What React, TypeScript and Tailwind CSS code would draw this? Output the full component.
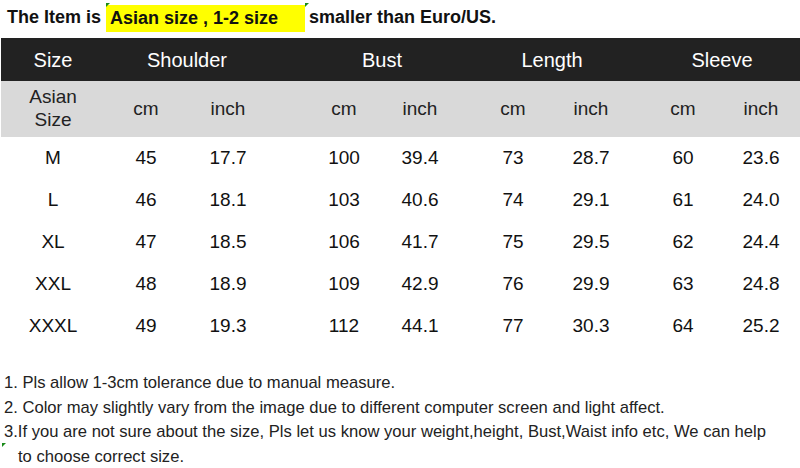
import React from "react";

const rows = [
  ["M", "45", "17.7", "100", "39.4", "73", "28.7", "60", "23.6"],
  ["L", "46", "18.1", "103", "40.6", "74", "29.1", "61", "24.0"],
  ["XL", "47", "18.5", "106", "41.7", "75", "29.5", "62", "24.4"],
  ["XXL", "48", "18.9", "109", "42.9", "76", "29.9", "63", "24.8"],
  ["XXXL", "49", "19.3", "112", "44.1", "77", "30.3", "64", "25.2"],
];

const Marker = () => (
  <svg width="4" height="4" viewBox="0 0 4 4" className="absolute">
    <polygon points="0,0 4,0 0,4" fill="#1a8a1a" />
  </svg>
);

const grid =
  "grid grid-cols-[104px_82px_82px_37px_76px_76px_16px_78px_78px_14px_78px_78px]";

export default function App() {
  const dataCols = (r: string[]) => [
    r[0],
    r[1],
    r[2],
    null,
    r[3],
    r[4],
    null,
    r[5],
    r[6],
    null,
    r[7],
    r[8],
  ];
  return (
    <div
      className="w-[800px] h-[468px] bg-white overflow-hidden text-[#111]"
      style={{ fontFamily: '"Liberation Sans", Arial, sans-serif' }}
    >
      {/* Title */}
      <div className="flex items-center h-[38px] pl-[7px] pb-[4px] text-[18px] font-bold">
        <span>The Item is</span>
        <div className="relative ml-[5px] h-[27px] w-[199px] bg-[#ffff00] flex items-center pl-[4px] mt-[2px]">
          <span className="absolute left-0 top-[-2px]">
            <Marker />
          </span>
          Asian size , 1-2 size
          <span className="absolute left-[199px] top-[-2px]">
            <Marker />
          </span>
        </div>
        <span className="ml-[4px]">smaller than Euro/US.</span>
      </div>

      {/* Table */}
      <div className="ml-[1px] w-[799px]">
        <div className={`${grid} h-[43px] bg-[#222222] text-white text-[20px] items-center text-center`}>
          <div>Size</div>
          <div className="col-span-2">Shoulder</div>
          <div />
          <div className="col-span-2">Bust</div>
          <div />
          <div className="col-span-2">Length</div>
          <div />
          <div className="col-span-2">Sleeve</div>
        </div>
        <div className={`${grid} h-[56px] bg-[#d9d9d9] text-[#222] text-[19px] items-center text-center`}>
          <div className="leading-[23px] pb-[2px]">
            Asian
            <br />
            Size
          </div>
          <div>cm</div>
          <div>inch</div>
          <div />
          <div>cm</div>
          <div>inch</div>
          <div />
          <div>cm</div>
          <div>inch</div>
          <div />
          <div>cm</div>
          <div>inch</div>
        </div>
        {rows.map((r) => (
          <div
            key={r[0]}
            className={`${grid} h-[42px] text-[19px] items-center text-center text-[#111]`}
          >
            {dataCols(r).map((c, i) => (
              <div key={i}>{c}</div>
            ))}
          </div>
        ))}
      </div>

      {/* Notes */}
      <div className="relative mt-[24px] pl-[4px] text-[16.6px] leading-[24.5px] text-[#222]">
        <div>1. Pls allow 1-3cm tolerance due to manual measure.</div>
        <div>2. Color may slightly vary from the image due to different computer screen and light affect.</div>
        <div>3.If you are not sure about the size, Pls let us know your weight,height, Bust,Waist info etc, We can help</div>
        <div className="pl-[14px]">to choose correct size.</div>
        <span className="absolute left-[2px] top-[72px]">
          <Marker />
        </span>
      </div>
    </div>
  );
}
